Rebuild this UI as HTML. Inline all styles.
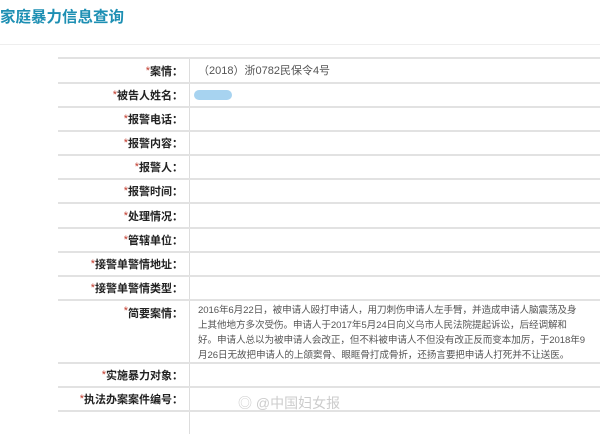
<!DOCTYPE html>
<html><head><meta charset="utf-8"><style>
*{margin:0;padding:0;box-sizing:border-box}
body{width:600px;height:416px;background:#fff;position:relative;overflow:hidden;font-family:"Liberation Sans","Noto Sans CJK SC",sans-serif;}
.title{position:absolute;left:0;top:5px;font-size:15.5px;font-weight:bold;color:#1d8fb3}
.hr{position:absolute;left:0;right:0;top:44px;height:1px;background:#eee}
.tbl{position:absolute;left:57px;right:-2px;top:57px;border-left:1px solid #ddd}
.row{position:absolute;left:0;right:0;border-top:2px solid #e2e2e2}
.lab{position:absolute;left:0;width:132px;top:0;bottom:0;border-right:1px solid #ddd;text-align:right;padding-right:6px;font-size:11px;color:#222;font-weight:bold;display:flex;align-items:center;justify-content:flex-end}
.lab i{color:#c0392b;font-style:normal;font-weight:normal}
.val{position:absolute;left:140px;right:0;top:0;font-size:11px;color:#555;line-height:16px;white-space:nowrap}
.p{font-size:9.6px;line-height:15px;letter-spacing:-0.1px}
</style></head><body>
<div class="title">家庭暴力信息查询</div>
<div class="hr"></div>
<div class="tbl">
<div class="row" style="top:0;height:25px"><div class="lab"><i>*</i>案情：</div><div class="val" style="top:4px">（2018）浙0782民保令4号</div></div>
<div class="row" style="top:25px;height:24px"><div class="lab"><i>*</i>被告人姓名：</div><div style="position:absolute;left:136px;top:6px;width:38px;height:10px;border-radius:5px;background:#a7d3f0"></div></div>
<div class="row" style="top:49px;height:24px"><div class="lab"><i>*</i>报警电话：</div></div>
<div class="row" style="top:73px;height:24px"><div class="lab"><i>*</i>报警内容：</div></div>
<div class="row" style="top:97px;height:24px"><div class="lab"><i>*</i>报警人：</div></div>
<div class="row" style="top:121px;height:24px"><div class="lab"><i>*</i>报警时间：</div></div>
<div class="row" style="top:145px;height:25px"><div class="lab"><i>*</i>处理情况：</div></div>
<div class="row" style="top:170px;height:24px"><div class="lab"><i>*</i>管辖单位：</div></div>
<div class="row" style="top:194px;height:24px"><div class="lab"><i>*</i>接警单警情地址：</div></div>
<div class="row" style="top:218px;height:24px"><div class="lab"><i>*</i>接警单警情类型：</div></div>
<div class="row" style="top:242px;height:63px"><div class="lab" style="align-items:flex-start;padding-top:4px"><i>*</i>简要案情：</div><div class="val p" style="top:2px">2016年6月22日，被申请人殴打申请人，用刀刺伤申请人左手臂，并造成申请人脑震荡及身<br>上其他地方多次受伤。申请人于2017年5月24日向义乌市人民法院提起诉讼，后经调解和<br>好。申请人总以为被申请人会改正，但不料被申请人不但没有改正反而变本加厉，于2018年9<br>月26日无故把申请人的上颌窦骨、眼眶骨打成骨折，还扬言要把申请人打死并不让送医。</div></div>
<div class="row" style="top:305px;height:24px"><div class="lab"><i>*</i>实施暴力对象：</div></div>
<div class="row" style="top:329px;height:24px"><div class="lab"><i>*</i>执法办案案件编号：</div></div>
<div class="row" style="top:353px;height:24px"><div class="lab"></div></div>
</div>
<div style="position:absolute;left:238px;top:393px;font-size:14px;color:#ccc;">◎ @中国妇女报</div>
</body></html>
